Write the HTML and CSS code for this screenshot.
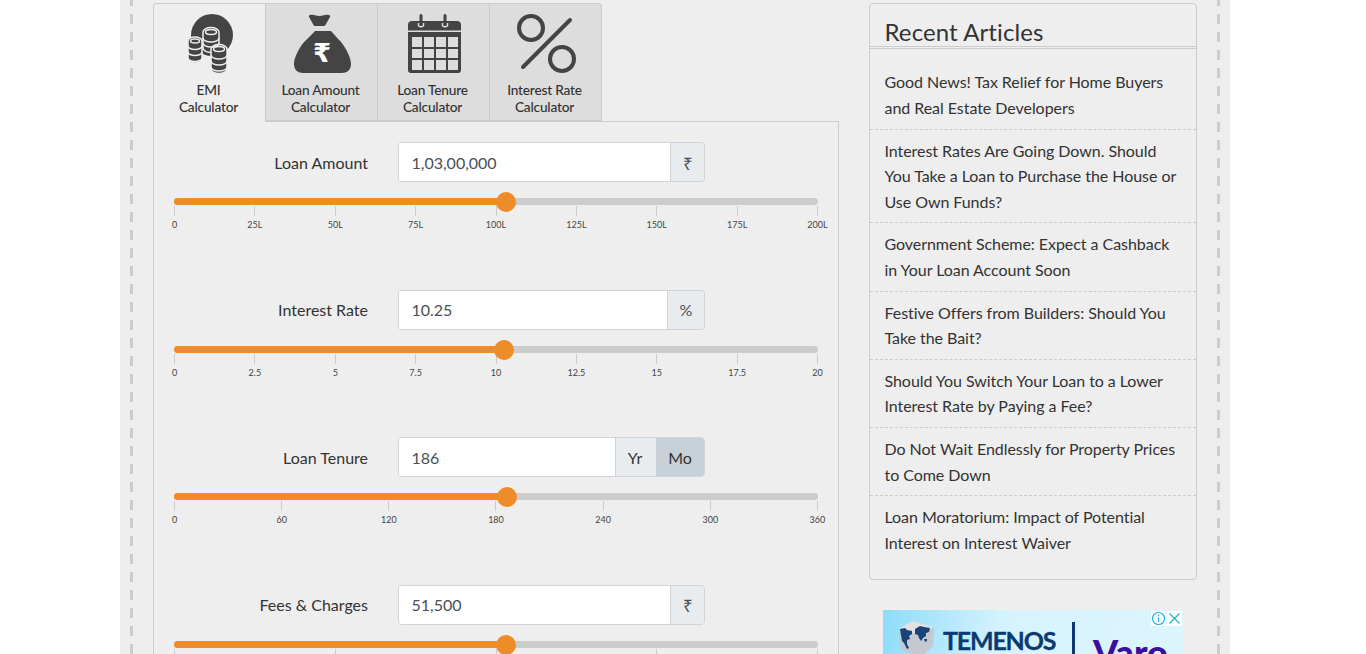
FILE: index.html
```html
<!DOCTYPE html>
<html lang="en">

<head>
	<meta charset="UTF-8">
	<meta name="viewport" content="width=device-width, initial-scale=1.0">
	<title>EMI Calculator</title>
	<link rel="stylesheet" href="styles.css">
</head>

<body>
	<div class="page">
		<div class="dashed">
			<main class="calc">
				<ul class="tabs">
					<li class="tab active">
						<svg class="tab-icon" viewBox="0 0 112 62" aria-hidden="true">
							<circle cx="58" cy="22" r="21" fill="#444"/>
							<g fill="#444" stroke="#eee" stroke-width="1.5">
								<path d="M49 19a8 4.5 0 0 1 16 0v16a8 4.5 0 0 1-16 0z"/>
								<path d="M34 28a7 4 0 0 1 14 0v18a7 4 0 0 1-14 0z"/>
								<path d="M57 36a8 4.500 0 0 1 16 0v20a8 4.500 0 0 1-16 0z"/>
							</g>
							<g fill="none" stroke="#eee" stroke-width="1.5">
								<ellipse cx="57" cy="19" rx="5.500" ry="2.500"/>
								<path d="M49 25a8 4 0 0 0 16 0M49 30a8 4 0 0 0 16 0"/>
								<ellipse cx="41" cy="28" rx="4.500" ry="2"/>
								<path d="M34 33a7 3.500 0 0 0 14 0M34 39a7 3.500 0 0 0 14 0M34 45a7 3.500 0 0 0 14 0"/>
								<ellipse cx="65" cy="36" rx="5.500" ry="2.500"/>
								<path d="M57 42a8 4 0 0 0 16 0M57 48a8 4 0 0 0 16 0M57 54a8 4 0 0 0 16 0"/>
							</g>
						</svg>
						<span>EMI<br>Calculator</span>
					</li>
					<li class="tab">
						<svg class="tab-icon" viewBox="0 0 112 62" aria-hidden="true">
							<path d="M44 2c4-1 6 1 9.500 1 3 0 5-2 9.500-1 1 .2 1.500 1 1 2l-4 7c-.4 1-1 2-2 2H49c-1 0-1.600-1-2-2l-4-7c-.5-1 0-1.800 1-2z" fill="#444"/>
							<path d="M49 18h16c4 5 9 9 13 15 3 5 7 12 7 18 0 6-4 9-9 9H37c-5 0-9-3-9-9 0-6 4-13 7-18 4-6 10-10 14-15z" fill="#444"/>
							<text x="56" y="49" class="bag-rupee">₹</text>
						</svg>
						<span>Loan Amount<br>Calculator</span>
					</li>
					<li class="tab">
						<svg class="tab-icon" viewBox="0 0 112 62" aria-hidden="true">
							<g transform="translate(1 0)">
								<path d="M33 8h45c2.500 0 4 1.500 4 4v5.500H29V12c0-2.500 1.500-4 4-4z" fill="#444"/>
								<path d="M29 19h53v38c0 2.500-1.500 3-4 3H33c-2.500 0-4-.5-4-3z" fill="#444"/>
								<g fill="#ddd">
									<rect x="33" y="24" width="10" height="10"/>
									<rect x="45" y="24" width="10" height="10"/>
									<rect x="57" y="24" width="10" height="10"/>
									<rect x="69" y="24" width="10" height="10"/>
									<rect x="33" y="36" width="10" height="9"/>
									<rect x="45" y="36" width="10" height="9"/>
									<rect x="57" y="36" width="10" height="9"/>
									<rect x="69" y="36" width="10" height="9"/>
									<rect x="33" y="47" width="10" height="10"/>
									<rect x="45" y="47" width="10" height="10"/>
									<rect x="57" y="47" width="10" height="10"/>
									<rect x="69" y="47" width="10" height="10"/>
								</g>
								<g fill="none" stroke="#ddd" stroke-width="1.500">
									<path d="M39.500 10v2.500a3 3 0 0 0 5 0V10"/>
									<path d="M63.500 10v2.500a3 3 0 0 0 5 0V10"/>
								</g>
								<g stroke="#444" stroke-width="3" stroke-linecap="round">
									<path d="M42 2.500v9M66 2.500v9"/>
								</g>
							</g>
						</svg>
						<span>Loan Tenure<br>Calculator</span>
					</li>
					<li class="tab">
						<svg class="tab-icon" viewBox="0 0 112 62" aria-hidden="true">
							<g fill="none" stroke="#444" stroke-width="4">
								<circle cx="41" cy="15" r="12"/>
								<circle cx="72" cy="46" r="12"/>
								<path d="M80 7 33 54" stroke-linecap="round"/>
							</g>
						</svg>
						<span>Interest Rate<br>Calculator</span>
					</li>
				</ul>

				<div class="panel">
					<section class="field">
						<div class="field-row">
							<label class="field-label" for="loanAmount">Loan Amount</label>
							<div class="input-group">
								<input id="loanAmount" type="text" value="1,03,00,000">
								<span class="addon rupee">₹</span>
							</div>
						</div>
						<div class="track">
							<div class="fill" style="width: 51.5%"></div>
							<div class="thumb" style="left: 51.5%"></div>
						</div>
						<div class="scale">
							<span class="mark">0</span><span class="mark">25L</span><span class="mark">50L</span><span class="mark">75L</span><span class="mark">100L</span><span class="mark">125L</span><span class="mark">150L</span><span class="mark">175L</span><span class="mark">200L</span>
						</div>
					</section>

					<section class="field">
						<div class="field-row">
							<label class="field-label" for="interestRate">Interest Rate</label>
							<div class="input-group">
								<input id="interestRate" type="text" value="10.25">
								<span class="addon percent">%</span>
							</div>
						</div>
						<div class="track">
							<div class="fill" style="width: 51.25%"></div>
							<div class="thumb" style="left: 51.25%"></div>
						</div>
						<div class="scale">
							<span class="mark">0</span><span class="mark">2.5</span><span class="mark">5</span><span class="mark">7.5</span><span class="mark">10</span><span class="mark">12.5</span><span class="mark">15</span><span class="mark">17.5</span><span class="mark">20</span>
						</div>
					</section>

					<section class="field">
						<div class="field-row">
							<label class="field-label" for="loanTenure">Loan Tenure</label>
							<div class="input-group">
								<input id="loanTenure" type="text" value="186">
								<span class="addon unit">Yr</span>
								<span class="addon unit selected">Mo</span>
							</div>
						</div>
						<div class="track">
							<div class="fill" style="width: 51.67%"></div>
							<div class="thumb" style="left: 51.67%"></div>
						</div>
						<div class="scale">
							<span class="mark">0</span><span class="mark">60</span><span class="mark">120</span><span class="mark">180</span><span class="mark">240</span><span class="mark">300</span><span class="mark">360</span>
						</div>
					</section>

					<section class="field">
						<div class="field-row">
							<label class="field-label" for="fees">Fees &amp; Charges</label>
							<div class="input-group">
								<input id="fees" type="text" value="51,500">
								<span class="addon rupee">₹</span>
							</div>
						</div>
						<div class="track">
							<div class="fill" style="width: 51.5%"></div>
							<div class="thumb" style="left: 51.5%"></div>
						</div>
						<div class="scale">
							<span class="mark"></span><span class="mark"></span><span class="mark"></span><span class="mark"></span><span class="mark"></span>
						</div>
					</section>
				</div>
			</main>

			<aside class="sidebar">
				<div class="articles">
					<h3>Recent Articles</h3>
					<ul>
						<li>Good News! Tax Relief for Home Buyers and Real Estate Developers</li>
						<li>Interest Rates Are Going Down. Should You Take a Loan to Purchase the House or Use Own Funds?</li>
						<li>Government Scheme: Expect a Cashback in Your Loan Account Soon</li>
						<li>Festive Offers from Builders: Should You Take the Bait?</li>
						<li>Should You Switch Your Loan to a Lower Interest Rate by Paying a Fee?</li>
						<li>Do Not Wait Endlessly for Property Prices to Come Down</li>
						<li>Loan Moratorium: Impact of Potential Interest on Interest Waiver</li>
					</ul>
				</div>

				<div class="ad">
					<svg class="ad-globe" viewBox="0 0 40 40" aria-hidden="true">
						<path d="M14 0 36 6l-1 19-13 11L3 28 1 8z" fill="#c3c9cf"/>
						<path d="M14 0 36 6 22 14 1 8z" fill="#dfe3e6"/>
						<path d="M2 8l5-1 2 2 5 1v3l-3 2 1 3-3 1v4l2 4-2 1-3-6-2-2-1-6zM17 8l5-3 4 1 6 1-1 4-3 1v3l-3 2-2 3-2-3-1-3-3-1zM26 18h3v2l-2 1z" fill="#1a4478"/>
					</svg>
					<span class="ad-brand">TEMENOS</span>
					<span class="ad-bar"></span>
					<span class="ad-partner">Varo</span>
					<span class="ad-controls">
						<svg viewBox="0 0 15 15" aria-hidden="true">
							<circle cx="7.500" cy="7.500" r="6" fill="none" stroke="#1fb6d6" stroke-width="1.200"/>
							<path d="M7.500 6.500v4.500M7.500 3.800v1.400" stroke="#1fb6d6" stroke-width="1.400"/>
						</svg>
						<svg viewBox="0 0 15 15" aria-hidden="true">
							<path d="M2.500 2.500l10 10M12.500 2.500l-10 10" stroke="#1fb6d6" stroke-width="1.300"/>
						</svg>
					</span>
				</div>
			</aside>
		</div>
	</div>
</body>
</html>
```

FILE: styles.css
```css
html, body {
	height: 100%;
}

body {
	margin: 0;
	overflow: hidden;
	background-color: #fff;
	font-family: Lato, "Liberation Sans", sans-serif;
	color: #333;
}

ul {
	list-style: none;
	margin: 0;
	padding: 0;
}

.page {
	width: 1110px;
	height: 654px;
	margin-left: 120px;
	padding: 0 10px;
	box-sizing: border-box;
	background-color: #eee;
	overflow: hidden;
}

.dashed {
	display: flex;
	height: 654px;
	box-sizing: border-box;
	padding: 3px 20px 0 23px;
	gap: 30px;
	background-image:
		repeating-linear-gradient(to bottom, #ccc 0 10px, transparent 10px 18px),
		repeating-linear-gradient(to bottom, #ccc 0 10px, transparent 10px 18px);
	background-size: 3px 700px, 3px 700px;
	background-position: left -4px, right -4px;
	background-repeat: no-repeat;
}

/* calculator */
.calc {
	width: 686px;
	flex: none;
}

.tabs {
	display: flex;
	width: 450px;
	height: 119px;
	position: relative;
	z-index: 1;
}

.tab {
	width: 112px;
	height: 118px;
	box-sizing: border-box;
	padding: 9px 2px 0 0;
	background-color: #ddd;
	border: 1px solid #ccc;
	border-left: none;
	text-align: center;
	font-size: 13.7px;
	font-weight: 500;
	line-height: 17px;
	letter-spacing: -0.2px;
	color: #333;
}

.tab:first-child {
	width: 113px;
	border-left: 1px solid #ccc;
	border-top-left-radius: 4px;
}

.tab:last-child {
	border-top-right-radius: 4px;
}

.tab.active {
	height: 119px;
	background-color: #eee;
	border-bottom: none;
}

.tab-icon {
	display: block;
	width: 112px;
	height: 62px;
	margin: 0 0 6px;
}

.bag-rupee {
	font-family: "DejaVu Sans", sans-serif;
	font-size: 26px;
	font-weight: bold;
	fill: #fff;
	text-anchor: middle;
}

.panel {
	height: 700px;
	margin-top: -1px;
	box-sizing: border-box;
	padding: 20px 20px 0;
	border: 1px solid #ccc;
}

.field {
	height: 147.5px;
}

.field-row {
	display: flex;
	align-items: center;
	padding-bottom: 16px;
}

.field-label {
	width: 194px;
	flex: none;
	margin-right: 30px;
	text-align: right;
	font-size: 16px;
	color: #333;
}

.input-group {
	display: flex;
	width: 307px;
	height: 40px;
	box-sizing: border-box;
	border: 1px solid #ced4da;
	border-radius: 4px;
	overflow: hidden;
}

.input-group input {
	flex: 1;
	min-width: 0;
	padding: 0 12px 0 12.5px;
	border: none;
	outline: none;
	background-color: #fff;
	font-family: inherit;
	font-size: 16px;
	color: #495057;
}

.addon {
	display: flex;
	align-items: center;
	justify-content: center;
	flex: none;
	box-sizing: border-box;
	border-left: 1px solid #ced4da;
	background-color: #e9ecef;
	font-size: 16px;
	color: #495057;
}

.rupee {
	width: 34px;
	padding-top: 2px;
	font-family: "Liberation Sans", sans-serif;
	font-size: 17px;
}

.percent {
	width: 37px;
}

.unit {
	width: 41px;
	padding-right: 2px;
	color: #333;
}

.unit.selected {
	width: 48px;
	padding-right: 0;
	border-left: none;
	background-color: #c8d0d8;
}

.track {
	position: relative;
	height: 7px;
	border-radius: 4px;
	background-color: #ccc;
}

.fill {
	height: 100%;
	border-radius: 4px;
	background-color: #ee8c2a;
}

.thumb {
	position: absolute;
	top: -6px;
	width: 20px;
	height: 20px;
	margin-left: -10px;
	border-radius: 50%;
	background-color: #ee8c2a;
}

.scale {
	display: flex;
	justify-content: space-between;
	margin-top: 1px;
}

.mark {
	width: 1px;
	height: 24px;
	box-sizing: border-box;
	padding-top: 13px;
	display: flex;
	justify-content: center;
	white-space: nowrap;
	background: linear-gradient(#ccc, #ccc) no-repeat 0 0 / 1px 10px;
	font-size: 9px;
	line-height: 12px;
	color: #444;
}

/* sidebar */
.sidebar {
	width: 328px;
	flex: none;
}

.articles {
	height: 577px;
	box-sizing: border-box;
	border: 1px solid #ccc;
	border-radius: 4px;
}

.articles h3 {
	height: 45px;
	box-sizing: border-box;
	margin: 0;
	padding: 13px 15px 0 14.5px;
	border-bottom: 3px double #ccc;
	font-size: 24px;
	font-weight: 400;
	line-height: 29px;
	letter-spacing: 0.1px;
	color: #333;
}

.articles ul {
	padding-top: 12.4px;
}

.articles li {
	padding: 8px 15px 8px 14.5px;
	border-bottom: 1px dashed #ccc;
	font-size: 16px;
	line-height: 25.6px;
	letter-spacing: -0.05px;
	color: #333;
}

.articles li:last-child {
	border-bottom: none;
}

.ad {
	position: relative;
	display: flex;
	align-items: flex-start;
	width: 300px;
	height: 44px;
	margin: 30px 0 0 14px;
	background: linear-gradient(100deg, #8cdcfb 0%, #d6f3fd 40%, #dcf5fd 100%);
	overflow: hidden;
}

.ad-globe {
	width: 40px;
	height: 40px;
	margin: 11px 0 0 15px;
	flex: none;
}

.ad-brand {
	width: 113px;
	flex: none;
	margin: 14px 0 0 5px;
	font-size: 25px;
	font-weight: 700;
	line-height: 33px;
	letter-spacing: -1.2px;
	white-space: nowrap;
	-webkit-text-stroke: 0.3px #0b3a72;
	color: #0b3a72;
}

.ad-bar {
	width: 3px;
	height: 40px;
	flex: none;
	margin: 12px 0 0 16px;
	background-color: #0b3a72;
}

.ad-partner {
	margin: 22px 0 0 18px;
	font-size: 36px;
	font-weight: 900;
	line-height: 40px;
	color: #3c0fa0;
}

.ad-controls {
	position: absolute;
	top: 1px;
	right: 1px;
	display: flex;
	gap: 1px;
}

.ad-controls svg {
	display: block;
	width: 15px;
	height: 15px;
	background-color: #fff;
}
```
